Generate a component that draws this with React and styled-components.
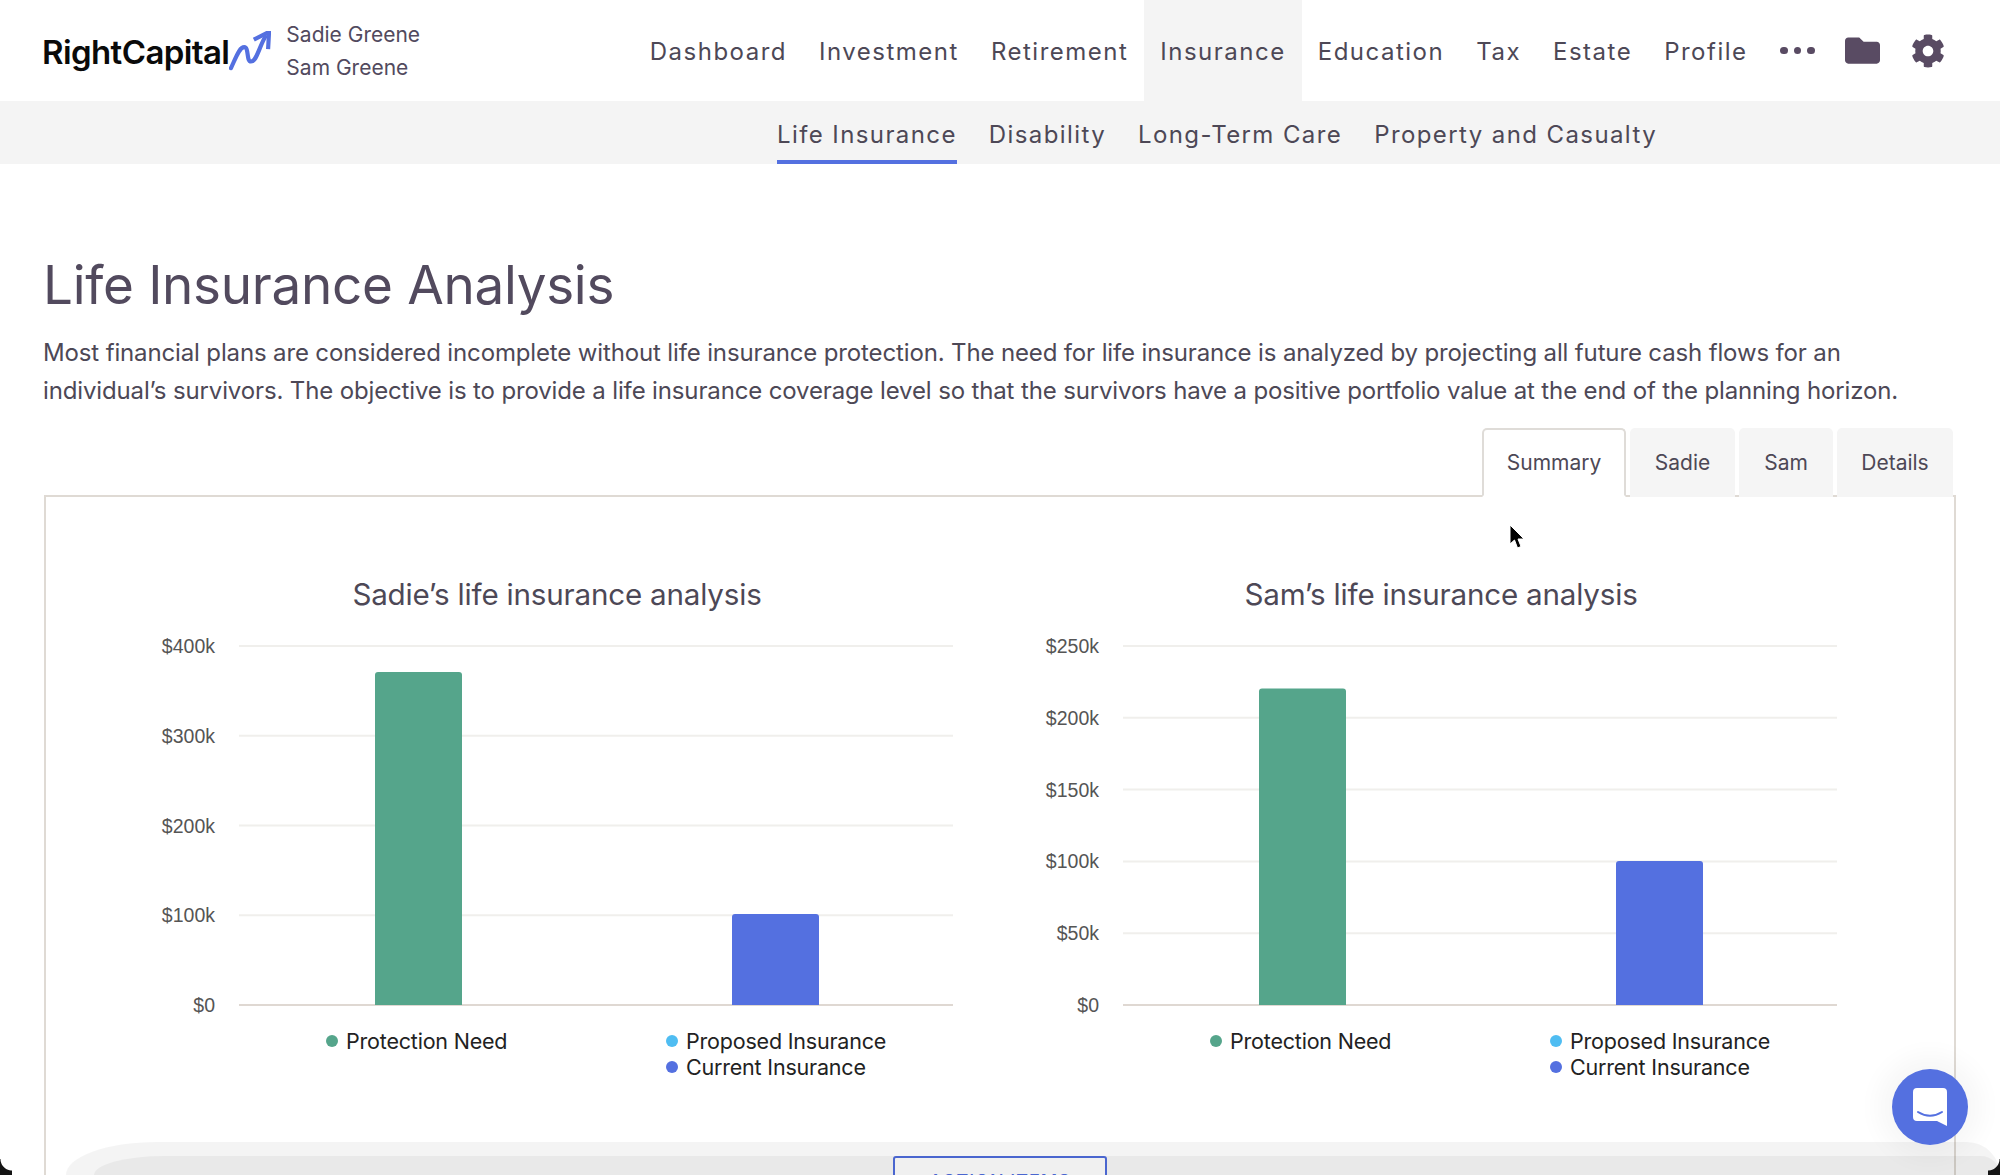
import React from 'react';
import styled, { createGlobalStyle } from 'styled-components';
import { FaCog, FaFolder } from 'react-icons/fa';

const Global = createGlobalStyle`
  html, body { margin: 0; padding: 0; background: #fff; }
  body { width: 2000px; height: 1175px; overflow: hidden; font-family: Inter, "Noto Sans", sans-serif; color: #4d4856; }
  * { box-sizing: border-box; }
`;
const Page = styled.div`position: relative; width: 2000px; height: 1175px; overflow: hidden;`;
const Header = styled.header`display: flex; align-items: stretch; height: 101px; padding: 0 55px 0 42px;`;
const Brand = styled.div`display: flex; align-items: center;`;
const LogoText = styled.span`font-size: 33px; font-weight: 600; letter-spacing: -0.6px; color: #0a0a0a; line-height: 1; margin-top: 4px;`;
const LogoMark = styled.svg`width: 42px; height: 40px; margin-left: 0;`;
const Names = styled.div`margin-left: 15px; font-size: 21px; line-height: 33px; color: #524a5e;`;
const Nav = styled.nav`display: flex; align-items: stretch; margin-left: auto;`;
const NavItem = styled.a`display: flex; align-items: center; padding: 2px 16px 0; font-size: 24px; letter-spacing: 1.5px; color: #4d4856; background: ${p => p.$active ? '#f4f4f4' : 'transparent'};`;
const Tools = styled.div`display: flex; align-items: center; margin-left: 16.5px; color: #594b63;`;
const Dots = styled.div`display: flex; gap: 6px; margin-right: 30.5px;`;
const Dot = styled.i`width: 7.5px; height: 7.5px; border-radius: 50%; background: #594b63;`;
const FolderIcon = styled(FaFolder)`width: 35px; height: 35px; margin-right: 31px;`;
const GearIcon = styled(FaCog)`width: 34px; height: 34px;`;

const SubNav = styled.nav`display: flex; height: 63px; background: #f4f4f4; padding-left: 777px; gap: 32px;`;
const SubItem = styled.a`display: flex; align-items: center; font-size: 24px; letter-spacing: 1.4px; color: #4d4856; padding-top: 7px; border-bottom: 4px solid ${p => p.$active ? '#5470e0' : 'transparent'};`;

const Main = styled.main`padding: 0 44px;`;
const Title = styled.h1`margin: 88px 0 0 -1px; font-size: 53px; font-weight: 400; line-height: 66px; color: #524a5e; letter-spacing: -0.3px;`;
const Intro = styled.p`margin: 16px 0 0 -1px; font-size: 24px; line-height: 38px; color: #4d4856; letter-spacing: -0.14px; white-space: nowrap;`;
const Tabs = styled.div`display: flex; justify-content: flex-end; gap: 4px; margin-top: 17.5px; padding-right: 3px; margin-bottom: -2px; position: relative; z-index: 1;`;
const Tab = styled.div`display: flex; align-items: center; justify-content: center; width: ${p => p.$w}px; height: 69px; font-size: 21px; color: #4d4856; background: ${p => p.$active ? '#fff' : '#f5f5f5'}; border-radius: 5px 5px 0 0;
  border: 2px solid ${p => p.$active ? '#dfdcd8' : 'transparent'}; border-bottom: 2px solid ${p => p.$active ? '#fff' : 'transparent'};`;
const Panel = styled.section`border: 2px solid #dfdad4; height: 720px; padding: 0 115px; display: grid; grid-template-columns: 792px 792px; column-gap: 92px;`;
const Chart = styled.figure`margin: 0;`;
const ChartTitle = styled.h2`margin: 77px 0 0; font-size: 29.6px; font-weight: 400; line-height: 40px; text-align: center; color: #4d4856; letter-spacing: -0.2px;`;
const Plot = styled.svg`display: block; width: 792px; height: 400px; margin-top: 17px;`;
const Legend = styled.div`display: flex; margin-top: -3px; padding-left: 165px;`;
const LegendCol = styled.div`flex: 0 0 340px; display: flex; flex-direction: column;`;
const LegendItem = styled.div`display: flex; align-items: center; gap: 8px; font-size: 21.5px; line-height: 26px; color: #222; letter-spacing: -0.2px; white-space: nowrap;`;
const LegendDot = styled.span`width: 12px; height: 12px; border-radius: 50%; background: ${p => p.$c};`;

const ShadeOuter = styled.div`position: absolute; left: 66px; right: 0; top: 1142px; bottom: 0; background: rgba(0,0,0,.045); border-radius: 90px 33px 0 0 / 33px 33px 0 0; z-index: 2;`;
const ShadeInner = styled.div`position: absolute; left: 28px; right: 0; top: 14px; bottom: 0; background: rgba(0,0,0,.045); border-radius: 70px 19px 0 0 / 19px 19px 0 0;`;
const ActionButton = styled.button`position: absolute; left: 893px; top: 1156px; width: 214px; height: 40px; border: 2px solid #4a66cf; border-radius: 3px; background: #f0f0f0; color: #4a66cf; font: 500 18px Inter, sans-serif; letter-spacing: 1px; padding: 10px 0 0; text-align: center; z-index: 3;`;
const Fab = styled.div`position: absolute; left: 1892px; top: 1069px; width: 76px; height: 76px; border-radius: 50%; background: #5470e0; display: flex; align-items: center; justify-content: center; z-index: 4; box-shadow: 0 0 24px 14px rgba(0,0,0,.035);`;
const FabIcon = styled.svg`width: 34px; height: 38px;`;
const Cursor = styled.svg`position: absolute; left: 1508px; top: 524px; width: 18px; height: 27px; z-index: 4;`;
const Corner = styled.div`position: absolute; bottom: 0; ${p => p.$side}: 0; width: 12px; height: 16px; z-index: 5;
  background: radial-gradient(circle at ${p => p.$side === 'left' ? '100% 0' : '0 0'}, transparent 11px, #141414 12px);`;

const nav = ['Dashboard', 'Investment', 'Retirement', 'Insurance', 'Education', 'Tax', 'Estate', 'Profile'];
const sub = ['Life Insurance', 'Disability', 'Long-Term Care', 'Property and Casualty'];
const tabs = [['Summary', 144], ['Sadie', 105], ['Sam', 94], ['Details', 116]];

const BASE = 374, TOP = 15, SPAN = BASE - TOP;
const charts = [
  { title: 'Sadie’s life insurance analysis', ticks: ['$0', '$100k', '$200k', '$300k', '$400k'], need: 333, cur: 91 },
  { title: 'Sam’s life insurance analysis', ticks: ['$0', '$50k', '$100k', '$150k', '$200k', '$250k'], need: 316.5, cur: 144 },
];

function Bars({ c }) {
  const step = SPAN / (c.ticks.length - 1);
  return (
    <Plot viewBox="0 0 792 400">
      {c.ticks.map((t, i) => {
        const y = BASE - i * step;
        return (
          <g key={t}>
            <line x1="78" x2="792" y1={y} y2={y} stroke={i === 0 ? '#dfd8d2' : '#f0efec'} strokeWidth="2" />
            <text x="54" y={y + 7} textAnchor="end" fontFamily="'Liberation Sans', sans-serif" fontSize="19.5" fill="#555">{t}</text>
          </g>
        );
      })}
      <path d={`M214 ${BASE}V${BASE - c.need + 3}a3 3 0 0 1 3-3h81a3 3 0 0 1 3 3V${BASE}z`} fill="#55a58b" />
      <path d={`M571 ${BASE}V${BASE - c.cur + 3}a3 3 0 0 1 3-3h81a3 3 0 0 1 3 3V${BASE}z`} fill="#5470e0" />
    </Plot>
  );
}

export default function App() {
  return (
    <Page>
      <Global />
      <Header>
        <Brand>
          <LogoText>RightCapital</LogoText>
          <LogoMark viewBox="0 0 44 42">
            <path d="M2 39C8 26 11 17 16 17C21 17 18 32 23 32C29 32 31 18 38 6" fill="none" stroke="#5470e0" strokeWidth="4.4" strokeLinecap="round" />
            <path d="M26 9L42 1L41 19" fill="none" stroke="#5470e0" strokeWidth="4.4" />
          </LogoMark>
          <Names>Sadie Greene<br />Sam Greene</Names>
        </Brand>
        <Nav>
          {nav.map(n => <NavItem key={n} $active={n === 'Insurance'}>{n}</NavItem>)}
        </Nav>
        <Tools>
          <Dots><Dot /><Dot /><Dot /></Dots>
          <FolderIcon />
          <GearIcon />
        </Tools>
      </Header>
      <SubNav>
        {sub.map((s, i) => <SubItem key={s} $active={i === 0}>{s}</SubItem>)}
      </SubNav>
      <Main>
        <Title>Life Insurance Analysis</Title>
        <Intro>
          Most financial plans are considered incomplete without life insurance protection. The need for life insurance is analyzed by projecting all future cash flows for an<br />
          individual’s survivors. The objective is to provide a life insurance coverage level so that the survivors have a positive portfolio value at the end of the planning horizon.
        </Intro>
        <Tabs>
          {tabs.map(([t, w], i) => <Tab key={t} $w={w} $active={i === 0}>{t}</Tab>)}
        </Tabs>
        <Panel>
          {charts.map(c => (
            <Chart key={c.title}>
              <ChartTitle>{c.title}</ChartTitle>
              <Bars c={c} />
              <Legend>
                <LegendCol>
                  <LegendItem><LegendDot $c="#55a58b" />Protection Need</LegendItem>
                </LegendCol>
                <LegendCol>
                  <LegendItem><LegendDot $c="#4fbdf2" />Proposed Insurance</LegendItem>
                  <LegendItem><LegendDot $c="#5470e0" />Current Insurance</LegendItem>
                </LegendCol>
              </Legend>
            </Chart>
          ))}
        </Panel>
      </Main>
      <ShadeOuter><ShadeInner /></ShadeOuter>
      <ActionButton>ACTION ITEMS</ActionButton>
      <Fab>
        <FabIcon viewBox="0 0 34 38">
          <path d="M4 0H30a4 4 0 0 1 4 4V38L24 33H4a4 4 0 0 1-4-4V4a4 4 0 0 1 4-4z" fill="#fff" />
          <path d="M5 24C13 29 21 29 29 24" fill="none" stroke="#5470e0" strokeWidth="2" strokeLinecap="round" />
        </FabIcon>
      </Fab>
      <Cursor viewBox="0 0 18 27">
        <path d="M2 1V20L6.5 16L9.5 24L13 22.5L10 15H16z" fill="#000" stroke="#fff" strokeWidth="1" />
      </Cursor>
      <Corner $side="left" />
      <Corner $side="right" />
    </Page>
  );
}
